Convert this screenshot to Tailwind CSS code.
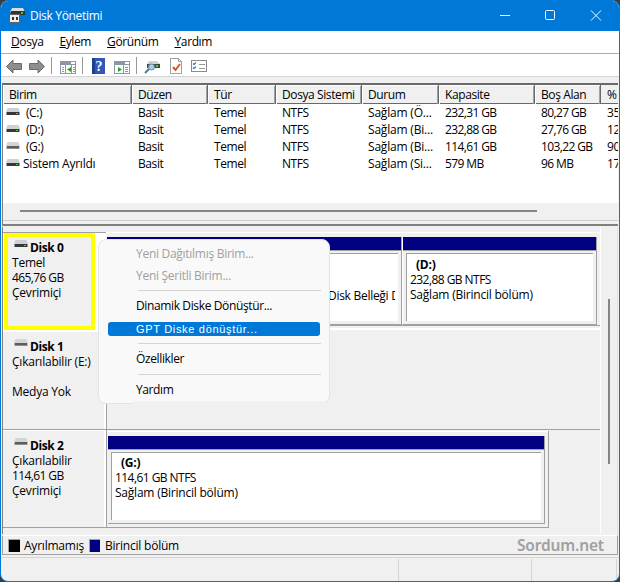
<!DOCTYPE html>
<html lang="tr">
<head>
<meta charset="utf-8">
<title>Disk Yönetimi</title>
<script src="https://cdn.jsdelivr.net/npm/@tailwindcss/browser@4"></script>
</head>
<body class="bg-[#3c3c3c] overflow-hidden">
<svg class="hidden">
  <symbol id="drive" viewBox="0 0 14 8"><path d="M1.500 0H12.500L14 4H0Z" fill="#cdd1d5"/><path d="M0.500 4H13.500V7H0.500Z" fill="#35383a"/><path d="M10 5h2v1h-2z" fill="#2be02b"/></symbol>
  <symbol id="usb" viewBox="0 0 14 8"><path d="M1.500 0H12.500L14 4H0Z" fill="#d3d5d7"/><path d="M0.500 4H13.500V7H0.500Z" fill="#8d8d8d"/><path d="M1 4H13V6H1Z" fill="#5c5c5c"/></symbol>
</svg>
<div class="relative flex h-[582px] w-[620px] flex-col overflow-hidden rounded-[8px] border border-[#0078d7] bg-[#f0f0f0] font-['Open_Sans','Noto_Sans',sans-serif] text-[12px] leading-[15px] tracking-[-0.42px] whitespace-nowrap text-black">
  <header class="flex h-[30px] shrink-0 items-center bg-[#0078d7] text-white">
    <svg class="ml-[8px] h-[16px] w-[17px] shrink-0" viewBox="0 0 17 16"><path d="M3 0h11l2 4H1z" fill="#d9dcdf"/><path d="M2 3h14v4H2z" fill="#303437"/><path d="M12 4h2v2h-2z" fill="#2be02b"/><path d="M1 6h10v8H1z" fill="#eee"/><path d="M.5 6.500h10v8H.5z" fill="none" stroke="#6b5f52"/><path d="M3 9h2v3H3zM7 9h2v3H7z" fill="#333"/></svg>
    <span class="ml-[4px] flex-1 pb-px text-[12px] tracking-[-0.32px]">Disk Yönetimi</span>
    <svg class="h-[30px] w-[138px]" viewBox="0 0 138 30" fill="none" stroke="#fff"><path d="M19 14.500h10"/><rect x="64.500" y="9.500" width="9" height="9" rx="1"/><path d="M110 9.500l10 10M120 9.500l-10 10"/></svg>
  </header>
  <nav class="flex h-[23px] shrink-0 items-center gap-[16px] border-b border-[#a9adb8] bg-white pb-px pl-[10px] tracking-[-0.38px]">
    <span><u>D</u>osya</span><span><u>E</u>ylem</span><span><u>G</u>örünüm</span><span><u>Y</u>ardım</span>
  </nav>
  <div class="h-[23px] shrink-0 border-b border-[#d5d5d5] bg-white">
    <svg class="h-[22px] w-[220px]" viewBox="1 54 220 22">
      <g fill="#8e8e8e" stroke="#6b6b6b"><path d="M6.500 66.500L13 60V63.500H21.500V69.500H13V73Z"/><path d="M44.500 66.500L38 60V63.500H29.500V69.500H38V73Z"/></g>
      <path d="M51.500 57v17M82.500 57v17M136.500 57v17" stroke="#999"/>
      <g fill="#fff" stroke="#8b97a5"><rect x="60.500" y="61.500" width="15" height="12"/><path d="M61 64.500h14M65.500 65v8M71.500 65v8M62 67.500h2M62 69.500h2M62 71.500h2M73 67.500h2M73 69.500h2M73 71.500h2"/><rect x="114.500" y="61.500" width="15" height="12"/><path d="M115 64.500h14M123.500 65v8M125 67.500h3M125 69.500h3M125 71.500h3"/></g>
      <path d="M61 62h10v2H61zM115 62h10v2h-10z" fill="#8b97a5"/>
      <path d="M71 67v5l-4-2.500zM118 67v5l4-2.500z" fill="#28a428"/>
      <rect x="92" y="58" width="13" height="16" fill="#3457b5"/><path d="M92 58h3v16h-3z" fill="#203e90"/><text x="95.500" y="71" fill="#fff" font-size="14" font-weight="700" letter-spacing="0" font-family="Liberation Serif, serif">?</text>
      <path d="M149 61h8l3 3h-13z" fill="#d0d3d6"/><path d="M147 64h13v4h-13z" fill="#444"/><path d="M156 65h2v2h-2z" fill="#2be02b"/><circle cx="151.500" cy="67" r="3" fill="#a9cde4" stroke="#6a8ba2"/><path d="M149 69l-4 4" stroke="#4d7793" stroke-width="2"/>
      <path d="M170.500 58.500h8l3 3v12h-11z" fill="#fff" stroke="#a0a0a0"/><path d="M178.500 58.500v3h3" fill="none" stroke="#a0a0a0"/><path d="M173 67l2.500 3 4.500-6" fill="none" stroke="#e2531f" stroke-width="2"/>
      <rect x="191.500" y="60.500" width="15" height="11" fill="#fff" stroke="#8b8b8b"/><path d="M193 63.500l1 1 2-2M193 67.500l1 1 2-2" fill="none" stroke="#3589d4" stroke-width="1.300"/><path d="M199 64.500h6M199 68.500h6" stroke="#999"/>
    </svg>
  </div>
  <section class="mx-px mt-[6px] flex h-[143px] w-[616px] shrink-0 flex-col overflow-hidden border-t-2 border-l border-[#696969] border-l-[#808080] bg-white">
    <div class="grid h-[19px] shrink-0 grid-cols-[129px_76px_68px_86px_77px_96px_66px_40px] border-b border-[#696969] bg-[#f0f0f0] leading-[19px] tracking-[-0.4px]">
      <span class="border-r border-[#696969] pl-[6px] shadow-[inset_1px_1px_#fff,inset_-1px_0_#a0a0a0]">Birim</span>
      <span class="border-r border-[#696969] pl-[6px] shadow-[inset_1px_1px_#fff,inset_-1px_0_#a0a0a0]">Düzen</span>
      <span class="border-r border-[#696969] pl-[6px] shadow-[inset_1px_1px_#fff,inset_-1px_0_#a0a0a0]">Tür</span>
      <span class="border-r border-[#696969] pl-[6px] shadow-[inset_1px_1px_#fff,inset_-1px_0_#a0a0a0]">Dosya Sistemi</span>
      <span class="border-r border-[#696969] pl-[6px] shadow-[inset_1px_1px_#fff,inset_-1px_0_#a0a0a0]">Durum</span>
      <span class="border-r border-[#696969] pl-[6px] shadow-[inset_1px_1px_#fff,inset_-1px_0_#a0a0a0]">Kapasite</span>
      <span class="border-r border-[#696969] pl-[6px] shadow-[inset_1px_1px_#fff,inset_-1px_0_#a0a0a0]">Boş Alan</span>
      <span class="pl-[6px]">%</span>
    </div>
    <div class="grid shrink-0 grid-cols-[129px_76px_68px_86px_77px_96px_66px_40px] auto-rows-[17px] leading-[17px] *:pl-[6px]">
      <span class="flex"><svg class="mt-[4px] -ml-[3px] mr-[6px] h-[8px] w-[14px]"><use href="#drive"/></svg>(C:)</span><span>Basit</span><span>Temel</span><span>NTFS</span><span class="tracking-[-0.2px]">Sağlam (Ö...</span><span class="tracking-[-0.62px]">232,31 GB</span><span class="tracking-[-0.62px]">80,27 GB</span><span>35</span>
      <span class="flex"><svg class="mt-[4px] -ml-[3px] mr-[6px] h-[8px] w-[14px]"><use href="#drive"/></svg>(D:)</span><span>Basit</span><span>Temel</span><span>NTFS</span><span class="tracking-[-0.2px]">Sağlam (Bi...</span><span class="tracking-[-0.62px]">232,88 GB</span><span class="tracking-[-0.62px]">27,76 GB</span><span>12</span>
      <span class="flex"><svg class="mt-[4px] -ml-[3px] mr-[6px] h-[8px] w-[14px]"><use href="#usb"/></svg>(G:)</span><span>Basit</span><span>Temel</span><span>NTFS</span><span class="tracking-[-0.2px]">Sağlam (Bi...</span><span class="tracking-[-0.62px]">114,61 GB</span><span class="tracking-[-0.62px]">103,22 GB</span><span>90</span>
      <span class="flex tracking-[-0.22px]"><svg class="mt-[4px] -ml-[3px] mr-[3px] h-[8px] w-[14px]"><use href="#drive"/></svg>Sistem Ayrıldı</span><span>Basit</span><span>Temel</span><span>NTFS</span><span class="tracking-[-0.2px]">Sağlam (Si...</span><span class="tracking-[-0.62px]">579 MB</span><span class="tracking-[-0.62px]">96 MB</span><span>17</span>
    </div>
    <div class="mt-auto h-[23px] shrink-0 border-b-2 border-[#808080] bg-[#f0f0f0] pt-[7px]"><div class="ml-[17px] h-[2px] w-[517px] bg-[#858585]"></div><div class="mt-[8px] h-px bg-[#d0d0d0]"></div></div>
  </section>
  <main class="mx-px mt-px flex h-[307px] w-[616px] shrink-0 border-l border-[#808080] tracking-[-0.22px]">
    <div class="w-[598px] border-r border-white pt-[5px]">
      <div class="flex h-[98px] border-b-2 border-white">
        <div class="h-[98px] w-[103px] border-t border-[#a0a0a0] bg-white">
          <div class="ml-px h-[97px] w-[91px] border-4 border-[#ffff00] bg-[#f0f0f0] pt-[3px] pl-[4px]">
            <div class="flex font-bold tracking-[-0.4px]"><svg class="mr-[2px] ml-[2px] h-[8px] w-[14px]"><use href="#drive"/></svg>Disk 0</div><div>Temel</div><div class="tracking-[-0.6px]">465,76 GB</div><div>Çevrimiçi</div>
          </div>
        </div>
        <div class="flex h-[94px] flex-1 border-b border-[#a0a0a0] pt-[5px] pl-px shadow-[inset_0_1px_#fff]">
          <div class="flex h-[88px] w-[295px] flex-col border-r border-b border-[#a0a0a0]">
            <div class="h-[14px] border-b border-[#a0a0a0] bg-[#000080]"></div>
            <div class="mt-[2px] mr-[3px] mb-[3px] ml-[3px] flex-1 overflow-hidden border-t border-l border-[#a0a0a0] bg-white pt-[34px] pr-[3px] pl-[217px] tracking-[-0.28px]"><div class="overflow-hidden">Disk Belleği Dökümü</div></div>
          </div>
          <div class="flex h-[88px] w-[195px] flex-col border-r border-b border-l border-[#a0a0a0] border-l-white">
            <div class="h-[14px] border-b border-[#a0a0a0] bg-[#000080]"></div>
            <div class="mt-[2px] mr-[3px] mb-[3px] ml-[3px] flex-1 border-t border-l border-[#a0a0a0] bg-white pt-[3px] pl-[3px]"><div class="pl-[6px] font-bold">(D:)</div><div class="tracking-[-0.55px]">232,88 GB NTFS</div><div>Sağlam (Birincil bölüm)</div></div>
          </div>
        </div>
      </div>
      <div class="flex h-[100px] border-b border-[#a0a0a0]">
        <div class="w-[104px] border-r border-[#a0a0a0] pt-[9px] pl-[9px] shadow-[inset_0_2px_#fff,inset_-2px_0_#fff]">
          <div class="flex font-bold tracking-[-0.4px]"><svg class="mr-[2px] ml-[2px] h-[8px] w-[14px]"><use href="#usb"/></svg>Disk 1</div><div>Çıkarılabilir (E:)</div><div class="mt-[15px]">Medya Yok</div>
        </div>
      </div>
      <div class="flex h-[98px]">
        <div class="w-[104px] border-r border-b border-[#a0a0a0] pt-[8px] pl-[9px] shadow-[inset_0_1px_#fff,inset_-2px_0_#fff]">
          <div class="flex font-bold tracking-[-0.4px]"><svg class="mr-[2px] ml-[2px] h-[8px] w-[14px]"><use href="#usb"/></svg>Disk 2</div><div>Çıkarılabilir</div><div class="tracking-[-0.6px]">114,61 GB</div><div>Çevrimiçi</div>
        </div>
        <div class="mt-px h-[97px] w-[442px] border-r border-b border-[#a0a0a0] pt-[5px] pl-px shadow-[inset_0_1px_#fff]">
          <div class="flex h-[88px] w-[437px] flex-col border-r border-b border-[#a0a0a0]">
            <div class="h-[14px] border-b border-[#a0a0a0] bg-[#000080]"></div>
            <div class="mt-[2px] mr-[3px] mb-[3px] ml-[3px] flex-1 border-t border-l border-[#a0a0a0] bg-white pt-[2px] pl-[3px]"><div class="pl-[6px] font-bold">(G:)</div><div class="tracking-[-0.55px]">114,61 GB NTFS</div><div>Sağlam (Birincil bölüm)</div></div>
          </div>
        </div>
      </div>
    </div>
    <div class="flex-1 border-r border-[#e0e0e0] pt-[72px] pl-[7px]"><div class="h-[165px] w-[2px] bg-[#858585]"></div></div>
  </main>
  <div class="mx-px mt-px flex h-[20px] w-[616px] shrink-0 items-center border border-t-white border-r-[#a0a0a0] border-b-[#a0a0a0] border-l-[#a0a0a0] pl-[5px] tracking-[-0.22px]">
    <i class="mr-[4px] h-[13px] w-[12px] border-t border-l border-[#a0a0a0] bg-black"></i>Ayrılmamış<i class="mr-[5px] ml-[5px] h-[13px] w-[11px] border-t border-l border-[#a0a0a0] bg-[#000080]"></i>Birincil bölüm
    <span class="mr-[13px] ml-auto font-['Noto_Sans'] text-[15.500px] font-semibold tracking-[-0.15px] text-[#a0a0a0]">Sordum.net</span>
  </div>
  <footer class="mt-[2px] flex flex-1 border-t border-[#d5d5d5] pt-px"><i class="w-[398px] border-r border-[#d5d5d5]"></i><i class="w-[133px] border-r border-[#d5d5d5]"></i><i class="w-[85px] border-r border-[#d5d5d5]"></i></footer>

  <div class="absolute top-[238px] left-[97px] h-[165px] w-[232px] rounded-[8px] border border-[#e3e3e3] bg-[#f9f9f9] pt-[3px] tracking-[-0.28px]">
    <div class="pl-[37px] leading-[22px] text-[#a0a0a0]">Yeni Dağıtılmış Birim...</div>
    <div class="pl-[37px] leading-[22px] text-[#a0a0a0]">Yeni Şeritli Birim...</div>
    <div class="mt-[3px] mr-[8px] ml-[39px] h-px bg-[#d5d5d5]"></div>
    <div class="mt-[4px] pl-[37px] leading-[22px] tracking-[-0.37px]">Dinamik Diske Dönüştür...</div>
    <div class="mt-[5px] mr-[9px] ml-[9px] h-[14px] rounded-[3px] bg-[#0078d7] pl-[28px] font-['Liberation_Sans',sans-serif] text-[11px] leading-[14px] tracking-[0.680px] text-white">GPT Diske dönüştür...</div>
    <div class="mt-[7px] mr-[8px] ml-[39px] h-px bg-[#d5d5d5]"></div>
    <div class="mt-[4px] pl-[37px] leading-[22px] tracking-[-0.37px]">Özellikler</div>
    <div class="mt-[4px] mr-[8px] ml-[39px] h-px bg-[#d5d5d5]"></div>
    <div class="mt-[4px] pl-[37px] leading-[22px] tracking-[-0.4px]">Yardım</div>
    <div class="mr-[2px] ml-[34px] h-[3px] bg-[#f0f0f0]"></div>
  </div>
</div>
</body>
</html>
